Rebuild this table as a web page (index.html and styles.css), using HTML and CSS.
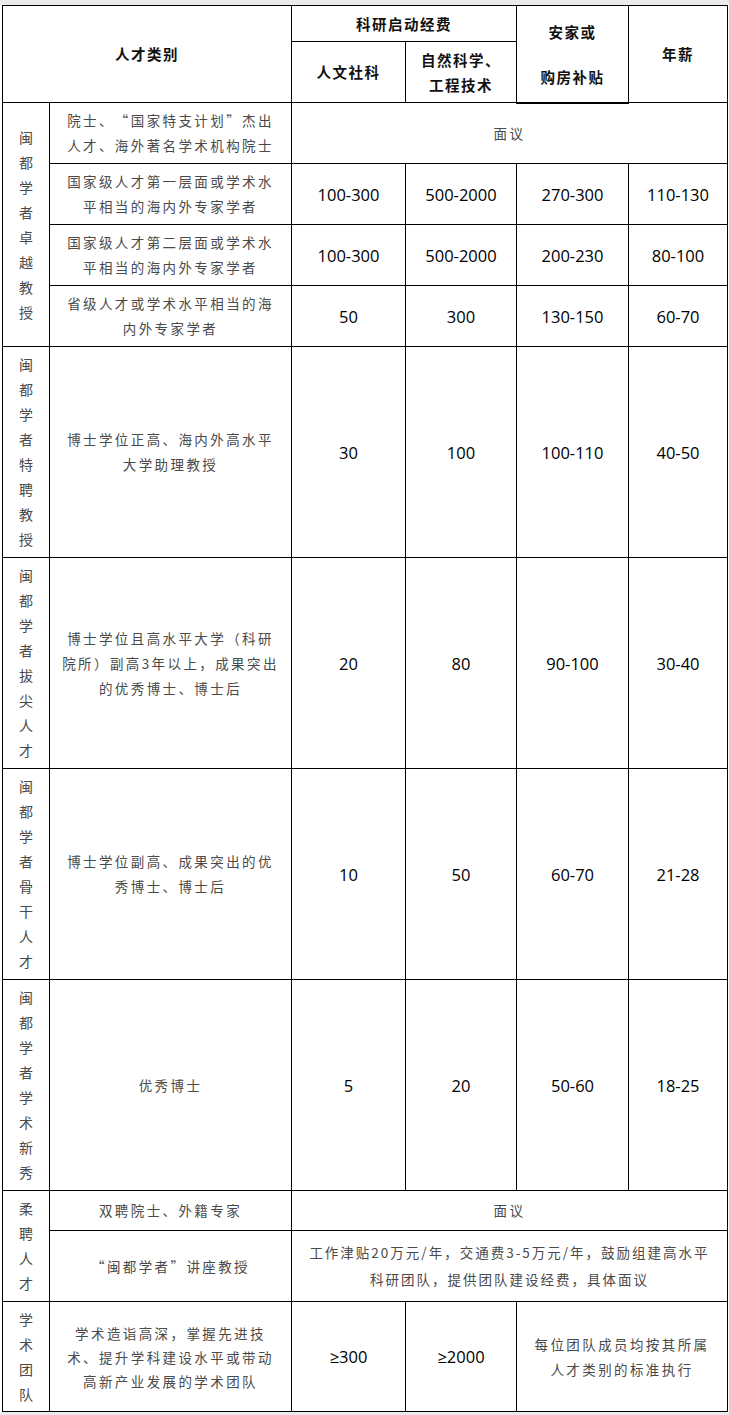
FILE: index.html
```html
<!DOCTYPE html>
<html lang="zh-CN">
<head>
<meta charset="utf-8">
<title>人才类别</title>
<link rel="stylesheet" href="styles.css">
</head>
<body>
<div class="page">
<table class="grid">
  <colgroup>
    <col class="c1"><col class="c2"><col class="c3"><col class="c4"><col class="c5"><col class="c6">
  </colgroup>
  <tr class="h-a">
    <td class="hd" colspan="2" rowspan="2">人才类别</td>
    <td class="hd" colspan="2">科研启动经费</td>
    <td class="hd two thick" rowspan="2">安家或<br>购房补贴</td>
    <td class="hd" rowspan="2">年薪</td>
  </tr>
  <tr class="h-b">
    <td class="hd">人文社科</td>
    <td class="hd lh">自然科学、<br>工程技术</td>
  </tr>

  <tr class="r61">
    <td class="side" rowspan="4"><div class="vert">闽都学者卓越教授</div></td>
    <td class="cn">院士、<span class="qo">“</span>国家特支计划<span class="qc">”</span>杰出<br>人才、海外著名学术机构院士</td>
    <td class="cn" colspan="4">面议</td>
  </tr>
  <tr class="r61">
    <td class="cn">国家级人才第一层面或学术水<br>平相当的海内外专家学者</td>
    <td class="num">100-300</td><td class="num">500-2000</td><td class="num">270-300</td><td class="num">110-130</td>
  </tr>
  <tr class="r61">
    <td class="cn">国家级人才第二层面或学术水<br>平相当的海内外专家学者</td>
    <td class="num">100-300</td><td class="num">500-2000</td><td class="num">200-230</td><td class="num">80-100</td>
  </tr>
  <tr class="r61">
    <td class="cn">省级人才或学术水平相当的海<br>内外专家学者</td>
    <td class="num">50</td><td class="num">300</td><td class="num">130-150</td><td class="num">60-70</td>
  </tr>

  <tr class="r211">
    <td class="side"><div class="vert">闽都学者特聘教授</div></td>
    <td class="cn">博士学位正高、海内外高水平<br>大学助理教授</td>
    <td class="num">30</td><td class="num">100</td><td class="num">100-110</td><td class="num">40-50</td>
  </tr>
  <tr class="r211">
    <td class="side"><div class="vert">闽都学者拔尖人才</div></td>
    <td class="cn">博士学位且高水平大学（科研<br>院所）副高3年以上，成果突出<br>的优秀博士、博士后</td>
    <td class="num">20</td><td class="num">80</td><td class="num">90-100</td><td class="num">30-40</td>
  </tr>
  <tr class="r211">
    <td class="side"><div class="vert">闽都学者骨干人才</div></td>
    <td class="cn">博士学位副高、成果突出的优<br>秀博士、博士后</td>
    <td class="num">10</td><td class="num">50</td><td class="num">60-70</td><td class="num">21-28</td>
  </tr>
  <tr class="r211">
    <td class="side"><div class="vert">闽都学者学术新秀</div></td>
    <td class="cn">优秀博士</td>
    <td class="num">5</td><td class="num">20</td><td class="num">50-60</td><td class="num">18-25</td>
  </tr>

  <tr class="r40">
    <td class="side" rowspan="2"><div class="vert">柔聘人才</div></td>
    <td class="cn">双聘院士、外籍专家</td>
    <td class="cn" colspan="4">面议</td>
  </tr>
  <tr class="r71">
    <td class="cn">“闽都学者<span class="qc">”</span>讲座教授</td>
    <td class="cn wide" colspan="4">工作津贴20万元/年，交通费3-5万元/年，鼓励组建高水平<br>科研团队，提供团队建设经费，具体面议</td>
  </tr>

  <tr class="r110">
    <td class="side"><div class="vert">学术团队</div></td>
    <td class="cn tight">学术造诣高深，掌握先进技<br>术、提升学科建设水平或带动<br>高新产业发展的学术团队</td>
    <td class="num">≥300</td><td class="num">≥2000</td>
    <td class="cn" colspan="2">每位团队成员均按其所属<br>人才类别的标准执行</td>
  </tr>
</table>
</div>
</body>
</html>
```

FILE: styles.css
```css
html, body {
  margin: 0;
  padding: 0;
  background: #ebebeb;
}

.page {
  margin-top: 5px;
  background: #ffffff;
  padding: 0 2px 0 2px;
  width: 725px;
}

.grid {
  border-collapse: collapse;
  table-layout: fixed;
  width: 725px;
}

.c1 { width: 47px; }
.c2 { width: 242px; }
.c3 { width: 114px; }
.c4 { width: 111px; }
.c5 { width: 112px; }
.c6 { width: 99px; }

.grid td {
  border: 1px solid #000;
  padding: 0;
  text-align: center;
  vertical-align: middle;
}

.h-a { height: 36px; }
.h-b { height: 61px; }
.r61 { height: 61px; }
.r211 { height: 211px; }
.r40 { height: 40px; }
.r71 { height: 71px; }
.r110 { height: 110px; }

.hd {
  font-family: "Noto Sans CJK SC", sans-serif;
  font-weight: 700;
  font-size: 14.5px;
  letter-spacing: 1.5px;
  color: #111;
  line-height: 24px;
}

.hd.lh { line-height: 25px; }
.hd.two { line-height: 45px; }
.grid td.thick { border-bottom: 2px solid #000; }

.cn {
  font-family: "Noto Sans CJK SC", sans-serif;
  font-size: 13.5px;
  letter-spacing: 2.4px;
  color: #4a4a4a;
  line-height: 25px;
}

.qo, .qc {
  display: inline-block;
  width: 13.5px;
  letter-spacing: 0;
  margin-right: 2.4px;
}

.qo { text-align: right; }
.qc { text-align: left; }

.cn.wide { line-height: 27px; letter-spacing: 2px; }
.cn.tight { line-height: 24px; }

.num {
  font-family: "Open Sans", sans-serif;
  font-size: 16.5px;
  color: #000;
}

.side {
  font-family: "Noto Sans CJK SC", sans-serif;
  font-size: 14px;
  color: #4a4a4a;
}

.vert {
  width: 1em;
  margin: 0 auto;
  line-height: 25px;
  word-break: break-all;
}
```
